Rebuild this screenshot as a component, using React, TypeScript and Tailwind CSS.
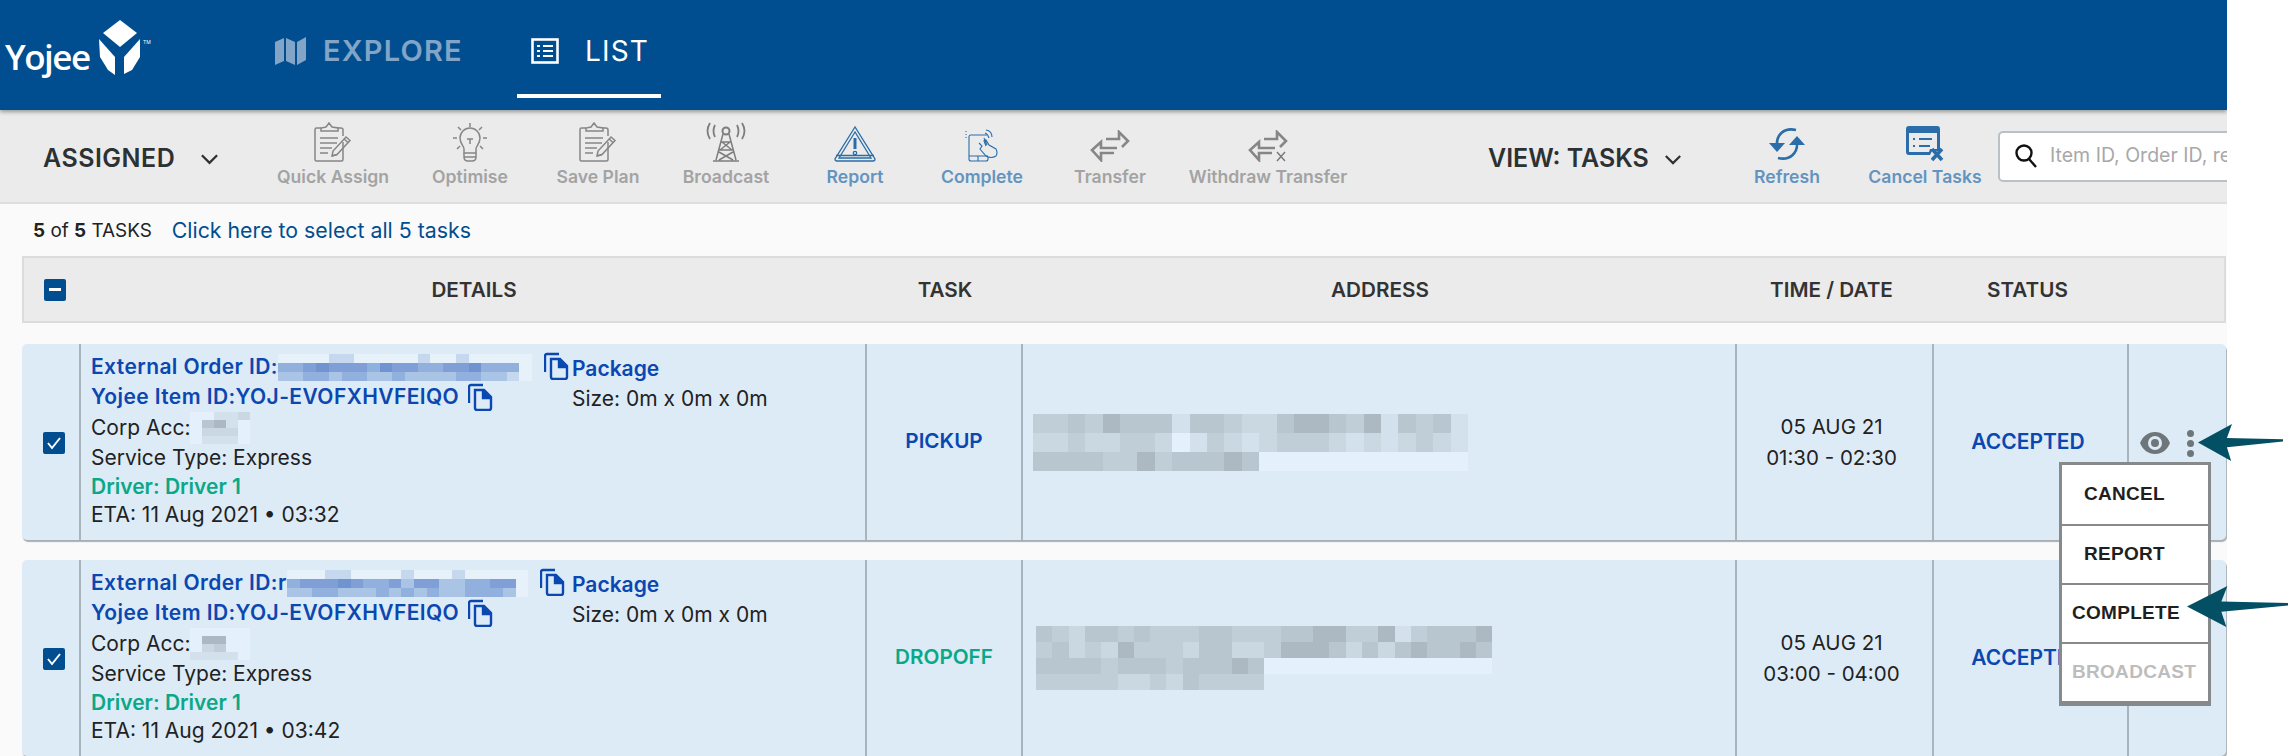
import React from 'react';

// shades used by the pixelated (redacted) blocks
const GRAY: Record<string, string> = {
  '1': '#e4f1fc',
  '2': '#d3e1ed',
  '3': '#cad8e2',
  '4': '#c0ced7',
  '5': '#b8c6cf',
  '6': '#adb9c2',
};
const BLUE: Record<string, string> = {
  '1': '#e6f1fa',
  '2': '#c6d8ee',
  '3': '#aac4e6',
  '4': '#92b0de',
  '5': '#7f9fd6',
  '6': '#6f94d0',
};

function Mosaic({ rows, cell, cellH, colors, className }: { rows: string[]; cell: number; cellH: number; colors: Record<string, string>; className?: string }) {
  const w = Math.max(...rows.map((r) => r.length)) * cell;
  return (
    <svg className={className} width={w} height={rows.length * cellH} shapeRendering="crispEdges">
      {rows.map((r, y) =>
        r.split('').map((c, x) =>
          colors[c] ? <rect key={`${x}-${y}`} x={x * cell} y={y * cellH} width={cell} height={cellH} fill={colors[c]} /> : null,
        ),
      )}
    </svg>
  );
}

function Chevron({ className }: { className?: string }) {
  return (
    <svg className={className} viewBox="0 0 20 12" fill="none" stroke="currentColor" strokeWidth="2.4">
      <path d="M2 2l8 8 8-8" />
    </svg>
  );
}

function ClipboardIcon() {
  return (
    <svg width="38" height="40" viewBox="0 0 38 40" fill="none" stroke="#868686" strokeWidth="1.5">
      <path d="M7 6H2.5Q1 6 1 7.5v30Q1 39 2.5 39h25q1.500 0 1.500-1.500V20M24 6h3q2 0 2 2v6" />
      <path d="M7 9V6l5-1 3-4 3 4 6 1v3z" />
      <path d="M6 16h18M6 21h17M6 26h12M6 31h8" />
      <path d="M18 34l1-5 13-14 4 3.500-13 14z" />
      <path d="M18 34l5-1.500M30 17l4 3.500" />
    </svg>
  );
}

function BulbIcon() {
  return (
    <svg width="34" height="40" viewBox="0 0 34 40" fill="none" stroke="#868686" strokeWidth="1.5">
      <path d="M17 1v4M5 5l3 3M29 5l-3 3M0 16h4M30 16h4M4 27l3-3M30 27l-3-3" />
      <path d="M11 31v-4c0-3-4-5-4-11a10 10 0 0 1 20 0c0 6-4 8-4 11v4z" />
      <path d="M14 17h6M17 17v5" />
      <path d="M11 31v4q0 4 4 4h4q4 0 4-4v-4M11 35h12" />
    </svg>
  );
}

function TowerIcon() {
  return (
    <svg width="42" height="40" viewBox="0 0 42 40" fill="none" stroke="#7d7d7d" strokeWidth="1.5">
      <circle cx="21" cy="9" r="3.500" strokeWidth="2" />
      <path d="M5 1q-5 8 0 16M37 1q5 8 0 16M10 3q-3 6 0 12M32 3q3 6 0 12" strokeWidth="1.800" />
      <path d="M18 12L11 38M24 12l7 26M8 39h26M16.500 20h9M14.500 28h13M17 20l10 8M25 20l-10 8M14 30l14 8M28 30l-14 8" />
    </svg>
  );
}

function ReportIcon() {
  return (
    <svg width="42" height="36" viewBox="0 0 42 36" fill="none" stroke="#2a6da8" strokeWidth="1.300">
      <path d="M21 1L1 33q0 2 2 2h36q2 0 2-2z" />
      <path d="M21 6L5 32h32z" />
      <path d="M2 29.500h38" />
      <path d="M21 12v11" strokeWidth="3" />
      <circle cx="21" cy="27" r="1.700" />
    </svg>
  );
}

function PhoneTapIcon() {
  return (
    <svg width="34" height="33" viewBox="0 0 34 33" fill="none" stroke="#2a6da8" strokeWidth="1.100">
      <path d="M22 6H6Q4 6 4 8v22q0 2 2 2h15q2 0 2-2v-2M4 27h19M13 27v5" />
      <path d="M1 2v1M1 5v1M1 8v1" />
      <path d="M21 1q6 1 6 7M20 4q3 1 4 5" />
      <path d="M14 14l3 3-2 3 6 7q5 3 10 0 2-3 0-7l-7-4-3-5q-2-1-2 1l2 5M19 9l3 7" />
    </svg>
  );
}

function TransferIcon({ cross }: { cross?: boolean }) {
  return (
    <svg width="40" height="32" viewBox="0 0 40 32" fill="none" stroke="#868686" strokeWidth="2.600">
      <path d="M16 9h13V2l9 9-6 6" strokeLinejoin="miter" />
      <path d="M24 23H11v7l-9-10 9-8v6h16" />
      {cross ? <path d="M29 22l8 9M37 22l-8 9" stroke="#777" strokeWidth="1.400" /> : null}
    </svg>
  );
}

function RefreshIcon() {
  return (
    <svg width="36" height="36" viewBox="0 0 36 36" fill="none" stroke="#2a6da8" strokeWidth="2.600">
      <path d="M8 20C7 9 15 1 27 4" />
      <path d="M28 16c1 11-7 19-19 16" />
      <path d="M0 17h16l-8 9z" fill="#2a6da8" stroke="none" />
      <path d="M20 19h16l-8-9z" fill="#2a6da8" stroke="none" />
    </svg>
  );
}

function CancelTasksIcon() {
  return (
    <svg width="38" height="36" viewBox="0 0 38 36" fill="none">
      <path d="M3 0h28q3 0 3 3v22h-8l-2 4H3q-3 0-3-3V3q0-3 3-3z" fill="#2a6da8" />
      <path d="M3 7h28v16h-7l-1 3H3z" fill="#ebebeb" />
      <path d="M7 13h2M13 13h13M7 20h2M13 20h11" stroke="#2a6da8" strokeWidth="2" />
      <path d="M26 23l10 11M36 23L26 34" stroke="#2a6da8" strokeWidth="3.600" />
    </svg>
  );
}

function CopyIcon() {
  return (
    <svg width="25" height="28" viewBox="0 0 25 28" fill="none" stroke="#0b47b1" strokeWidth="2.400">
      <path d="M15 2H3Q1 2 1 4v16" />
      <path d="M7 7h9l7 7v11q0 2-2 2H9q-2 0-2-2z" />
      <path d="M15 7v8h8" fill="#0b47b1" />
    </svg>
  );
}

function PointerArrow({ className, width, height }: { className: string; width: number; height: number }) {
  return (
    <svg className={className} width={width} height={height} viewBox="0 0 100 40" preserveAspectRatio="none">
      <path d="M0 20L40 0l-6 15 66 1.500v2.500L34 25l5 15z" fill="#034f64" />
    </svg>
  );
}

type Action = { label: string; width: string; active?: boolean; icon: React.ReactNode };

const ACTIONS: Action[] = [
  { label: 'Quick Assign', width: 'w-[136px]', icon: <ClipboardIcon /> },
  { label: 'Optimise', width: 'w-[138px]', icon: <BulbIcon /> },
  { label: 'Save Plan', width: 'w-[118px]', icon: <ClipboardIcon /> },
  { label: 'Broadcast', width: 'w-[138px]', icon: <TowerIcon /> },
  { label: 'Report', width: 'w-[120px]', active: true, icon: <ReportIcon /> },
  { label: 'Complete', width: 'w-[134px]', active: true, icon: <PhoneTapIcon /> },
  { label: 'Transfer', width: 'w-[122px]', icon: <TransferIcon /> },
  { label: 'Withdraw Transfer', width: 'w-[194px]', icon: <TransferIcon cross /> },
];

function ActionButton({ a }: { a: Action }) {
  return (
    <div className={`${a.width} flex h-[62px] shrink-0 flex-col items-center justify-end`}>
      <div className="flex h-[40px] items-end">{a.icon}</div>
      <div className={`mt-[5px] whitespace-nowrap text-[17.600px] font-semibold leading-[20px] ${a.active ? 'text-[#6394c0]' : 'text-[#a3a3a3]'}`}>{a.label}</div>
    </div>
  );
}

const COLS = 'grid-cols-[57px_786px_156px_714px_197px_195px_99px]';

type Row = {
  task: string;
  taskClass: string;
  start: string;
  eta: string;
  orderPrefix: string;
  orderRows: string[];
  corpRows: string[];
  addrRows: string[];
  addrCell: number;
  addrH: number;
  addrClass: string;
};

const ROWS: Row[] = [
  {
    task: 'PICKUP',
    taskClass: 'text-[#0b47b1]',
    start: '01:30 - 02:30',
    eta: '11 Aug 2021 • 03:32',
    orderPrefix: '',
    orderRows: ['11112211111211211111', '44565554655445564441', '33443443343333443321'],
    corpRows: ['11223', '15621', '13331', '12221'],
    addrRows: ['4454655525543356654625452', '3343344312432344432323432', '5555446455565111111111111'],
    addrCell: 17.400,
    addrH: 19,
    addrClass: 'ml-[10px]',
  },
  {
    task: 'DROPOFF',
    taskClass: 'text-[#0ba888]',
    start: '03:00 - 04:00',
    eta: '11 Aug 2021 • 03:42',
    orderPrefix: 'r',
    orderRows: ['1112211112111211111', '4555654453553344551', '3344333434343344431'],
    corpRows: ['11111', '16611', '13411', '22221'],
    addrRows: ['5435545444554445566446245556', '4534364443553346665353565565', '5555455545556511111111111111', '44444334354444'],
    addrCell: 16.300,
    addrH: 16,
    addrClass: 'ml-[13px]',
  },
];

function TaskRow({ row, first }: { row: Row; first: boolean }) {
  const cell = 'border-l-2 border-[#a9b5bd] flex items-center justify-center';
  return (
    <div className={`${COLS} grid h-[196px] shrink-0 overflow-hidden rounded-[5px] bg-[#ddebf7] shadow-[1px_2px_1px_#a7afb5]`}>
      <div className="flex items-center justify-center pl-[6px] pt-[1px]">
        <span className="flex h-[22px] w-[22px] items-center justify-center rounded-[2px] bg-[#004e8f]">
          <svg width="16" height="14" viewBox="0 0 16 14" fill="none" stroke="#fff" strokeWidth="2">
            <path d="M2 7l4 5 8-10" />
          </svg>
        </span>
      </div>
      <div className="flex border-l-2 border-[#a9b5bd] pl-[10px] pt-[8px] text-[21px] leading-[29.700px] text-[#222]">
        <div className="w-[481px] shrink-0">
          <div className="flex h-[30px] items-center font-semibold tracking-[0.400px] text-[#0b47b1]">
            <span className="whitespace-nowrap">External Order ID:{row.orderPrefix}</span>
            <Mosaic className="shrink-0" rows={row.orderRows} cell={12.700} cellH={9} colors={BLUE} />
            <span className="ml-[12px] shrink-0 -translate-y-[1px]"><CopyIcon /></span>
          </div>
          <div className="flex h-[30px] items-center font-semibold tracking-[0.400px] text-[#0b47b1]">
            <span className="whitespace-nowrap">Yojee Item ID:YOJ-EVOFXHVFEIQO</span>
            <span className="ml-[9px] shrink-0"><CopyIcon /></span>
          </div>
          <div className="flex h-[30px] items-center pt-[2px]">
            <span className="whitespace-nowrap">Corp Acc:</span>
            <Mosaic className="shrink-0" rows={row.corpRows} cell={12} cellH={8} colors={GRAY} />
          </div>
          <div className="h-[30px] whitespace-nowrap pt-[1px]">Service Type: Express</div>
          <div className="h-[28px] whitespace-nowrap font-semibold text-[#0ba888]">Driver: Driver 1</div>
          <div className="h-[28px] whitespace-nowrap">ETA: {row.eta}</div>
        </div>
        <div className="pt-[2px]">
          <div className="h-[30px] font-semibold text-[#0b47b1]">Package</div>
          <div className="whitespace-nowrap">Size: 0m x 0m x 0m</div>
        </div>
      </div>
      <div className={`${cell} pb-[2px] text-[20.700px] font-semibold ${row.taskClass}`}>{row.task}</div>
      <div className="flex items-center border-l-2 border-[#a9b5bd]">
        <Mosaic className={row.addrClass} rows={row.addrRows} cell={row.addrCell} cellH={row.addrH} colors={GRAY} />
      </div>
      <div className={`${cell} flex-col pr-[6px] text-[20.500px] leading-[31px] text-[#222]`}>
        <div>05 AUG 21</div>
        <div>{row.start}</div>
      </div>
      <div className={`${cell} pr-[5px] text-[21px] font-semibold text-[#0b47b1]`}>ACCEPTED</div>
      <div className="relative flex items-center border-l-2 border-[#a9b5bd]">
        {first ? (
          <div className="ml-[11px] mt-[2px] flex items-center gap-[17px]">
            <svg width="30" height="22" viewBox="0 0 30 22">
              <path d="M15 0C8 0 3 4 0 11c3 7 8 11 15 11s12-4 15-11C27 4 22 0 15 0z" fill="#6f7679" />
              <circle cx="15" cy="11" r="7" fill="#ddebf7" />
              <circle cx="15" cy="11" r="4" fill="#6f7679" />
            </svg>
            <div className="flex flex-col gap-[3px]">
              <span className="h-[7px] w-[7px] rounded-full bg-[#6f7679]" />
              <span className="h-[7px] w-[7px] rounded-full bg-[#6f7679]" />
              <span className="h-[7px] w-[7px] rounded-full bg-[#6f7679]" />
            </div>
          </div>
        ) : null}
      </div>
    </div>
  );
}

const MENU = [
  { label: 'CANCEL', cls: 'pl-[22px] text-[#1f1f1f]' },
  { label: 'REPORT', cls: 'pl-[22px] text-[#1f1f1f]' },
  { label: 'COMPLETE', cls: 'pl-[10px] text-[#1f1f1f]' },
  { label: 'BROADCAST', cls: 'pl-[10px] text-[#bdbdbd]' },
];

export default function App() {
  return (
    <div className="relative h-[756px] w-[2288px] overflow-hidden bg-white font-['Inter',sans-serif]">
      <div className="h-full w-[2227px] overflow-hidden bg-[#fafafa]">
        {/* Top nav */}
        <header className="relative z-10 flex h-[110px] items-center bg-[#004e8f] shadow-[0_2px_4px_rgba(0,0,0,0.35)]">
          <div className="relative ml-[5px] h-[80px] w-[150px] shrink-0">
            <span className="absolute left-0 top-[22px] font-['Open_Sans',sans-serif] text-[35px] font-semibold leading-[40px] tracking-[-1.500px] text-white">Yojee</span>
            <svg className="absolute left-[94px] top-[5px]" width="42" height="56" viewBox="0 0 42 56" fill="#fff">
              <path d="M21 0l17 13-17 14L4 13z" />
              <path d="M0 19l16 18v18l-7-5-8-13z" />
              <path d="M41 19L25 37v17l8-4 8-13z" />
            </svg>
            <span className="absolute left-[138px] top-[24px] text-[5px] text-white">TM</span>
          </div>
          <nav className="ml-[120px] flex h-full items-center pb-[9px]">
            <div className="flex items-center gap-[17px] text-[#82a5c7]">
              <svg width="31" height="28" viewBox="0 0 31 28" fill="#82a5c7">
                <path d="M0 5l9-4v23l-9 4zM11 1l9 4v23l-9-4zM22 5l9-5v23l-9 5z" />
              </svg>
              <span className="text-[29px] font-semibold leading-[34px] tracking-[1.200px]">EXPLORE</span>
            </div>
            <div className="relative ml-[54px] flex h-full w-[144px] items-center pl-[14px] text-white">
              <svg width="28" height="26" viewBox="0 0 28 26" fill="none" stroke="#fff" strokeWidth="2.600">
                <rect x="1.500" y="1.500" width="25" height="23" />
                <path d="M6 8h3M12 8h10M6 13h3M12 13h10M6 18h3M12 18h10" strokeWidth="2.200" />
              </svg>
              <span className="ml-[26px] text-[28px] leading-[34px] tracking-[1.200px]">LIST</span>
              <span className="absolute bottom-[3px] left-0 h-[4px] w-full bg-white" />
            </div>
          </nav>
        </header>

        {/* Toolbar */}
        <div className="flex h-[94px] items-center border-b-2 border-[#dedede] bg-[#ebebeb]">
          <div className="ml-[43px] flex w-[222px] shrink-0 items-center pt-[6px] text-[#2c3133]">
            <span className="text-[25px] font-semibold tracking-[0.500px]">ASSIGNED</span>
            <Chevron className="ml-[25px] h-[12px] w-[19px]" />
          </div>
          {ACTIONS.map((a) => (
            <ActionButton key={a.label} a={a} />
          ))}
          <div className="ml-[123px] flex w-[234px] shrink-0 items-center pt-[6px] text-[#2c3133]">
            <span className="whitespace-nowrap text-[25px] font-semibold">VIEW: TASKS</span>
            <Chevron className="ml-[15px] h-[11px] w-[18px]" />
          </div>
          <ActionButton a={{ label: 'Refresh', width: 'w-[130px]', active: true, icon: <RefreshIcon /> }} />
          <ActionButton a={{ label: 'Cancel Tasks', width: 'w-[146px]', active: true, icon: <CancelTasksIcon /> }} />
          <div className="flex h-[51px] w-[290px] shrink-0 items-center rounded-[5px] border-2 border-[#b7c1c6] bg-white pl-[14px]">
            <svg width="24" height="26" viewBox="0 0 24 26" fill="none" stroke="#111" strokeWidth="2.400">
              <circle cx="10" cy="10" r="7.500" />
              <path d="M15 16l7 8" />
            </svg>
            <span className="ml-[12px] whitespace-nowrap text-[19.500px] text-[#a8a8a8]">Item ID, Order ID, ref</span>
          </div>
        </div>

        {/* Selection line */}
        <div className="flex h-[52px] items-center pl-[33px] pt-[2px]">
          <span className="text-[18.900px] text-[#222]"><b className="font-bold">5</b> of <b className="font-bold">5</b> TASKS</span>
          <span className="ml-[20px] text-[21.300px] text-[#004e8f]">Click here to select all 5 tasks</span>
        </div>

        {/* Table */}
        <div className="ml-[22px] w-[2204px]">
          <div className={`${COLS} grid h-[67px] items-center border-2 border-[#dcdcdc] bg-[#ebebeb] text-[20.700px] font-semibold text-[#333]`}>
            <div className="flex justify-center pl-[4px]">
              <span className="flex h-[22px] w-[22px] items-center justify-center rounded-[2px] bg-[#004e8f]">
                <span className="h-[3px] w-[12px] bg-white" />
              </span>
            </div>
            <div className="text-center">DETAILS</div>
            <div className="text-center">TASK</div>
            <div className="text-center">ADDRESS</div>
            <div className="pr-[8px] text-center">TIME / DATE</div>
            <div className="pr-[8px] text-center">STATUS</div>
            <div />
          </div>
          <div className="mt-[21px] flex flex-col gap-[20px]">
            {ROWS.map((r, i) => (
              <TaskRow key={r.task} row={r} first={i === 0} />
            ))}
          </div>
        </div>
      </div>

      {/* Open row menu, lies over both rows */}
      <div className="absolute left-[2059px] top-[462px] w-[152px] border-x-[3px] border-t-[3px] border-b-[5px] border-[#868a8c] bg-white font-['Liberation_Sans',sans-serif] text-[19px] font-bold tracking-[0.300px]">
        {MENU.map((m, i) => (
          <div key={m.label} className={`flex h-[59px] items-center ${i > 0 ? 'border-t-[2px] border-[#868a8c]' : ''} ${m.cls}`}>{m.label}</div>
        ))}
      </div>

      {/* Screenshot annotations */}
      <PointerArrow className="absolute left-[2198px] top-[424px]" width={85} height={37} />
      <PointerArrow className="absolute left-[2187px] top-[586px]" width={101} height={41} />
    </div>
  );
}
